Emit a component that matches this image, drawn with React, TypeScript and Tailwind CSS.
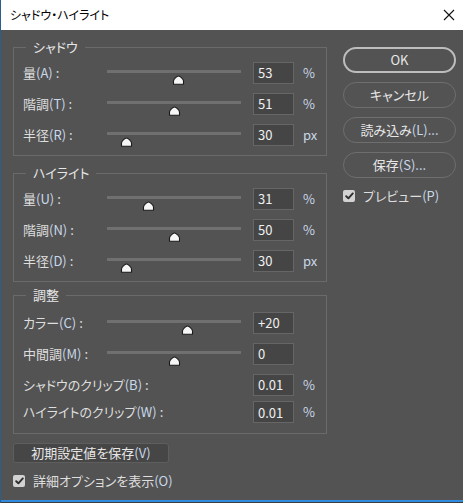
import React from "react";

type SliderRow = { jp: string; key: string; value: string; unit: string; thumb: number };
type ClipRow = { jp: string; key: string; value: string; unit: string };

const shadowRows: SliderRow[] = [
  { jp: "量", key: "(A)", value: "53", unit: "%", thumb: 71 },
  { jp: "階調", key: "(T)", value: "51", unit: "%", thumb: 67 },
  { jp: "半径", key: "(R)", value: "30", unit: "px", thumb: 19 },
];

const highlightRows: SliderRow[] = [
  { jp: "量", key: "(U)", value: "31", unit: "%", thumb: 41 },
  { jp: "階調", key: "(N)", value: "50", unit: "%", thumb: 67 },
  { jp: "半径", key: "(D)", value: "30", unit: "px", thumb: 19 },
];

const adjustRows: SliderRow[] = [
  { jp: "カラー", key: "(C)", value: "+20", unit: "", thumb: 80 },
  { jp: "中間調", key: "(M)", value: "0", unit: "", thumb: 67 },
];

const clipRows: ClipRow[] = [
  { jp: "シャドウのクリップ", key: "(B)", value: "0.01", unit: "%" },
  { jp: "ハイライトのクリップ", key: "(W)", value: "0.01", unit: "%" },
];

function Key({ children }: { children: React.ReactNode }) {
  return <span className="text-[#c9d8ea]">{children}</span>;
}

function Label({ jp, k }: { jp: string; k: string }) {
  return (
    <span className="whitespace-nowrap">
      {jp}
      <Key>{k}</Key>
      <span className="ml-[3px]">:</span>
    </span>
  );
}

// slider handle: white dome with a dark outline, hanging under the track
function Thumb({ left }: { left: number }) {
  return (
    <svg
      width="13"
      height="10"
      viewBox="0 0 13 10"
      className="absolute top-[18px]"
      style={{ left: left - 6.5 }}
    >
      <path
        d="M6.5 1 C8.2 1 11.5 4.2 11.5 6 V9.3 H1.5 V6 C1.5 4.2 4.8 1 6.5 1 Z"
        fill="#f6f6f6"
        stroke="#1a1a1a"
        strokeWidth="1.1"
        strokeLinejoin="round"
      />
    </svg>
  );
}

function NumberBox({ value }: { value: string }) {
  return (
    <div className="w-[41px] h-[22px] shrink-0 border border-[#666666] bg-[#454545] pl-[4px] flex items-center text-[13px] text-[#f0f0f0] leading-none">
      {value}
    </div>
  );
}

function Slider({ row }: { row: SliderRow }) {
  return (
    <div className="h-[31px] flex items-start">
      <div className="w-[84px] shrink-0 h-full flex items-center">
        <Label jp={row.jp} k={row.key} />
      </div>
      <div className="relative w-[134px] shrink-0 h-full pt-[13px]">
        <div className="h-[3px] w-full bg-[#707070]" />
        <Thumb left={row.thumb} />
      </div>
      <div className="ml-[12px] h-full flex items-center">
        <NumberBox value={row.value} />
        <span className="ml-[9px] text-[#c9d8ea]">{row.unit}</span>
      </div>
    </div>
  );
}

function Group({
  title,
  className,
  children,
}: {
  title: string;
  className: string;
  children: React.ReactNode;
}) {
  return (
    <div className={`relative border border-[#6a6a6a] pl-[9px] ${className}`}>
      <span className="absolute -top-[10px] left-[12px] px-[7px] leading-[18px] bg-[#535353] text-[#e6e6e6]">
        {title}
      </span>
      {children}
    </div>
  );
}

function Check() {
  return (
    <span className="w-[12px] h-[12px] rounded-[2px] bg-[#d2d2d2] flex items-center justify-center shrink-0">
      <svg width="9" height="8" viewBox="0 0 9 8">
        <path
          d="M1.2 4.2 L3.4 6.3 L7.8 1.4"
          fill="none"
          stroke="#2e2e2e"
          strokeWidth="1.9"
          strokeLinecap="round"
          strokeLinejoin="round"
        />
      </svg>
    </span>
  );
}

function PillButton({ children, primary }: { children: React.ReactNode; primary?: boolean }) {
  return (
    <div
      className={`h-[26px] w-[113px] rounded-full flex items-center justify-center text-[#e8e8e8] ${
        primary ? "border-2 border-[#bdbdbd]" : "border border-[#6e6e6e]"
      }`}
    >
      {children}
    </div>
  );
}

export default function App() {
  return (
    <div className="w-[463px] h-[503px] flex flex-col border-l border-[#2a5e8e] font-['Noto_Sans_CJK_JP',sans-serif] [font-feature-settings:'palt'] text-[13px] text-[#dedede] overflow-hidden">
      {/* title bar */}
      <div className="h-[30px] shrink-0 bg-white flex items-center justify-between pl-[9px] pr-[7px]">
        <span className="text-[12px] text-black">シャドウ・ハイライト</span>
        <svg width="12" height="12" viewBox="0 0 12 12" className="mr-[1px]">
          <path d="M1 1 L11 11 M11 1 L1 11" stroke="#111" strokeWidth="1.1" />
        </svg>
      </div>

      {/* dialog body */}
      <div className="h-[470px] shrink-0 bg-[#535353] flex pl-[12px]">
        <div className="w-[314px] shrink-0 pt-[17px] flex flex-col">
          <Group title="シャドウ" className="pt-[9px] pb-[5px]">
            {shadowRows.map((r) => (
              <Slider key={r.key} row={r} />
            ))}
          </Group>

          <Group title="ハイライト" className="mt-[17px] pt-[9px] pb-[5px]">
            {highlightRows.map((r) => (
              <Slider key={r.key} row={r} />
            ))}
          </Group>

          <Group title="調整" className="mt-[13px] pt-[11px] pb-[9px]">
            {adjustRows.map((r) => (
              <Slider key={r.key} row={r} />
            ))}
            {clipRows.map((r, i) => (
              <div
                key={r.key}
                className={`flex items-center ${i === 0 ? "h-[31px]" : "h-[24px]"}`}
              >
                <div className="w-[230px] shrink-0">
                  <Label jp={r.jp} k={r.key} />
                </div>
                <NumberBox value={r.value} />
                <span className="ml-[9px] text-[#c9d8ea]">{r.unit}</span>
              </div>
            ))}
          </Group>

          <div className="mt-[9px] w-[156px] h-[20px] rounded-[3px] border border-[#5e5e5e] bg-[#464646] flex items-center justify-center text-[#e6e6e6]">
            初期設定値を保存<Key>(V)</Key>
          </div>

          <div className="mt-[10px] h-[16px] flex items-center gap-[8px]">
            <Check />
            <span>
              詳細オプションを表示<Key>(O)</Key>
            </span>
          </div>
        </div>

        <div className="ml-[16px] pt-[17px] flex flex-col">
          <div className="flex flex-col gap-[9px]">
            <PillButton primary>OK</PillButton>
            <PillButton>キャンセル</PillButton>
            <PillButton>
              読み込み<Key>(L)...</Key>
            </PillButton>
            <PillButton>
              保存<Key>(S)...</Key>
            </PillButton>
          </div>
          <div className="mt-[11px] h-[14px] flex items-center gap-[8px]">
            <Check />
            <span>
              プレビュー<Key>(P)</Key>
            </span>
          </div>
        </div>
      </div>

      <div className="h-[2px] shrink-0 bg-[#2f8ae0]" />
      <div className="h-[1px] shrink-0 bg-[#3c3c3c]" />
    </div>
  );
}
